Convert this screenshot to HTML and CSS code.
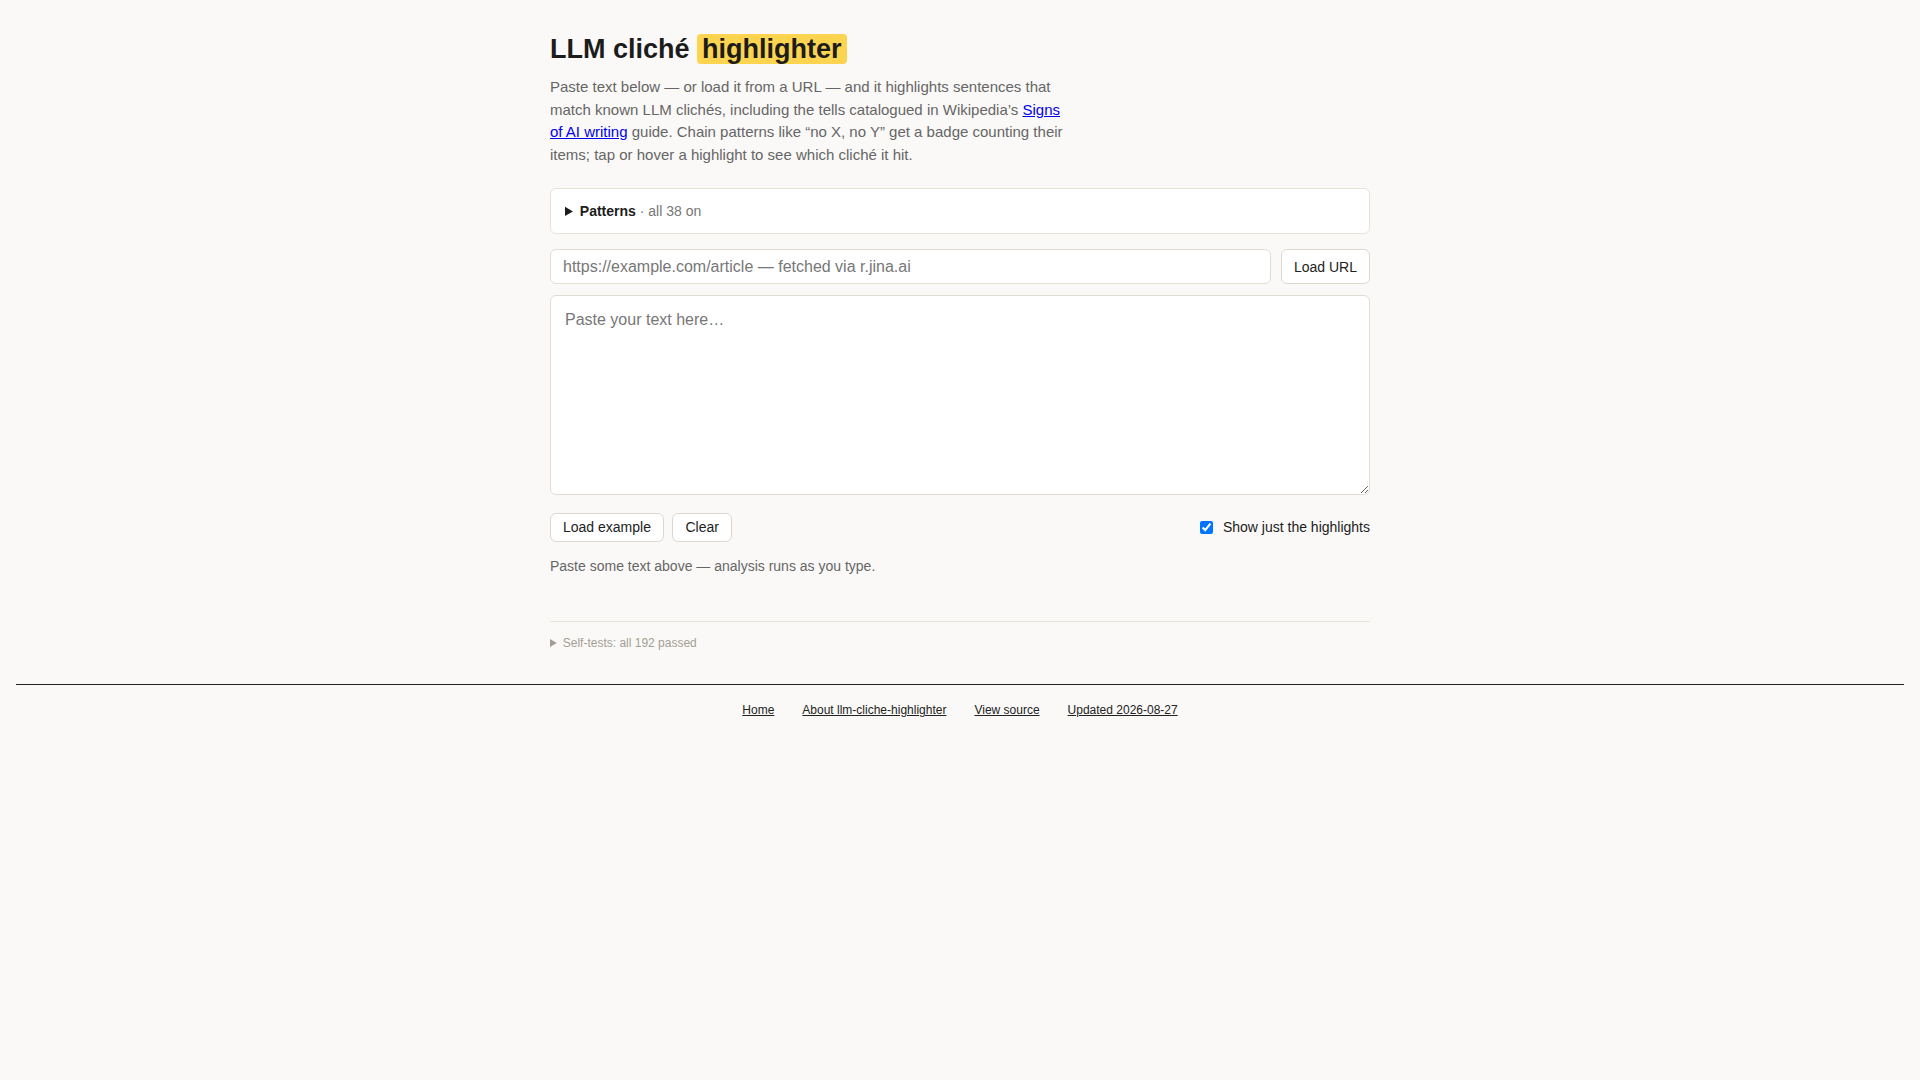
FILE: index.html
```html
<!DOCTYPE html>
<html lang="en">
<head>
<meta charset="utf-8">
<title>LLM cliché highlighter</title>
<link rel="stylesheet" href="styles.css">
</head>
<body>
<main class="wrap">
  <h1 class="title">LLM cliché <span class="hl">highlighter</span></h1>
  <p class="intro">Paste text below — or load it from a URL — and it highlights sentences that match known LLM clichés, including the tells catalogued in Wikipedia’s <a href="#">Signs of AI writing</a> guide. Chain patterns like “no X, no Y” get a badge counting their items; tap or hover a highlight to see which cliché it hit.</p>

  <details class="patterns">
    <summary><span class="patterns-label">Patterns</span><span class="patterns-count"> · all 38 on</span></summary>
  </details>

  <div class="url-row">
    <input class="url-input" type="text" placeholder="https://example.com/article — fetched via r.jina.ai">
    <button class="btn btn-tall" type="button">Load URL</button>
  </div>

  <textarea class="text-input" placeholder="Paste your text here…"></textarea>

  <div class="actions">
    <div class="btn-group">
      <button class="btn" type="button">Load example</button>
      <button class="btn" type="button">Clear</button>
    </div>
    <label class="toggle"><input type="checkbox" checked> Show just the highlights</label>
  </div>

  <p class="status">Paste some text above — analysis runs as you type.</p>

  <details class="selftests">
    <summary>Self-tests: all 192 passed</summary>
  </details>
</main>

<footer class="site-footer">
  <nav class="footer-nav">
    <a href="#">Home</a>
    <a href="#">About llm-cliche-highlighter</a>
    <a href="#">View source</a>
    <a href="#">Updated 2026-08-27</a>
  </nav>
</footer>
</body>
</html>
```

FILE: styles.css
```css
* { box-sizing: border-box; }

body {
  margin: 0;
  background: #faf9f7;
  color: #1c1c1c;
  font-family: "Liberation Sans", Arial, sans-serif;
}

.wrap {
  max-width: 820px;
  margin: 0 auto;
  padding: 33px 0 32.5px;
}

.title {
  font-size: 27px;
  line-height: 32px;
  font-weight: 700;
  margin: 0 0 11px;
  color: #1c1c1c;
}

.hl {
  background: #fdd44f;
  padding: 0 5px;
  border-radius: 4px;
}

.intro {
  font-size: 15px;
  line-height: 22.6px;
  color: #666;
  max-width: 520px;
  margin: 0 0 22px;
}

.intro a { color: #0000ee; }

.patterns {
  background: #fff;
  border: 1px solid #e6e1d9;
  border-radius: 6px;
  padding: 12px 14px;
  margin-bottom: 15px;
}

.patterns summary {
  font-size: 14px;
  line-height: 20px;
  cursor: pointer;
}

.patterns-label { font-weight: 700; color: #1c1c1c; }
.patterns-count { color: #777; }

.url-row {
  display: flex;
  gap: 9.5px;
  margin-bottom: 10.5px;
}

.url-input {
  flex: 1;
  font-family: inherit;
  font-size: 16px;
  line-height: 17px;
  padding: 8px 12px;
  border: 1px solid #e2ddd4;
  border-radius: 6px;
  background: #fff;
  color: #1c1c1c;
}

.url-input::placeholder,
.text-input::placeholder { color: #777; }

.btn {
  font-family: inherit;
  font-size: 14px;
  line-height: 16px;
  padding: 5.5px 12px;
  border: 1px solid #ddd8cf;
  border-radius: 6px;
  background: #fff;
  color: #222;
  cursor: pointer;
}

.btn-tall { padding-top: 0; padding-bottom: 0; }

.text-input {
  display: block;
  width: 100%;
  height: 200px;
  padding: 12px 14px;
  font-family: inherit;
  font-size: 16px;
  line-height: 1.5;
  border: 1px solid #e2ddd4;
  border-radius: 6px;
  background: #fff;
  resize: vertical;
  margin: 0 0 18px;
}

.actions {
  display: flex;
  justify-content: space-between;
  align-items: center;
}

.btn-group {
  display: flex;
  gap: 8.5px;
}

.toggle {
  display: flex;
  align-items: center;
  gap: 9.5px;
  font-size: 14px;
  color: #1c1c1c;
}

.toggle input {
  margin: 0;
  width: 13px;
  height: 13px;
}

.status {
  font-size: 14px;
  line-height: 21px;
  color: #666;
  margin: 14px 0 0;
}

.selftests {
  margin-top: 44px;
  border-top: 1px solid #e6e1d9;
  padding-top: 12px;
  font-size: 12px;
  line-height: 18px;
  color: #a39e95;
}

.selftests summary { cursor: pointer; }

.site-footer {
  margin: 0 16px;
  border-top: 1px solid #222;
  padding: 16px 0;
  font-size: 12px;
  line-height: 18px;
}

.footer-nav {
  display: flex;
  justify-content: center;
  gap: 28px;
}

.footer-nav a { color: #222; }
```
